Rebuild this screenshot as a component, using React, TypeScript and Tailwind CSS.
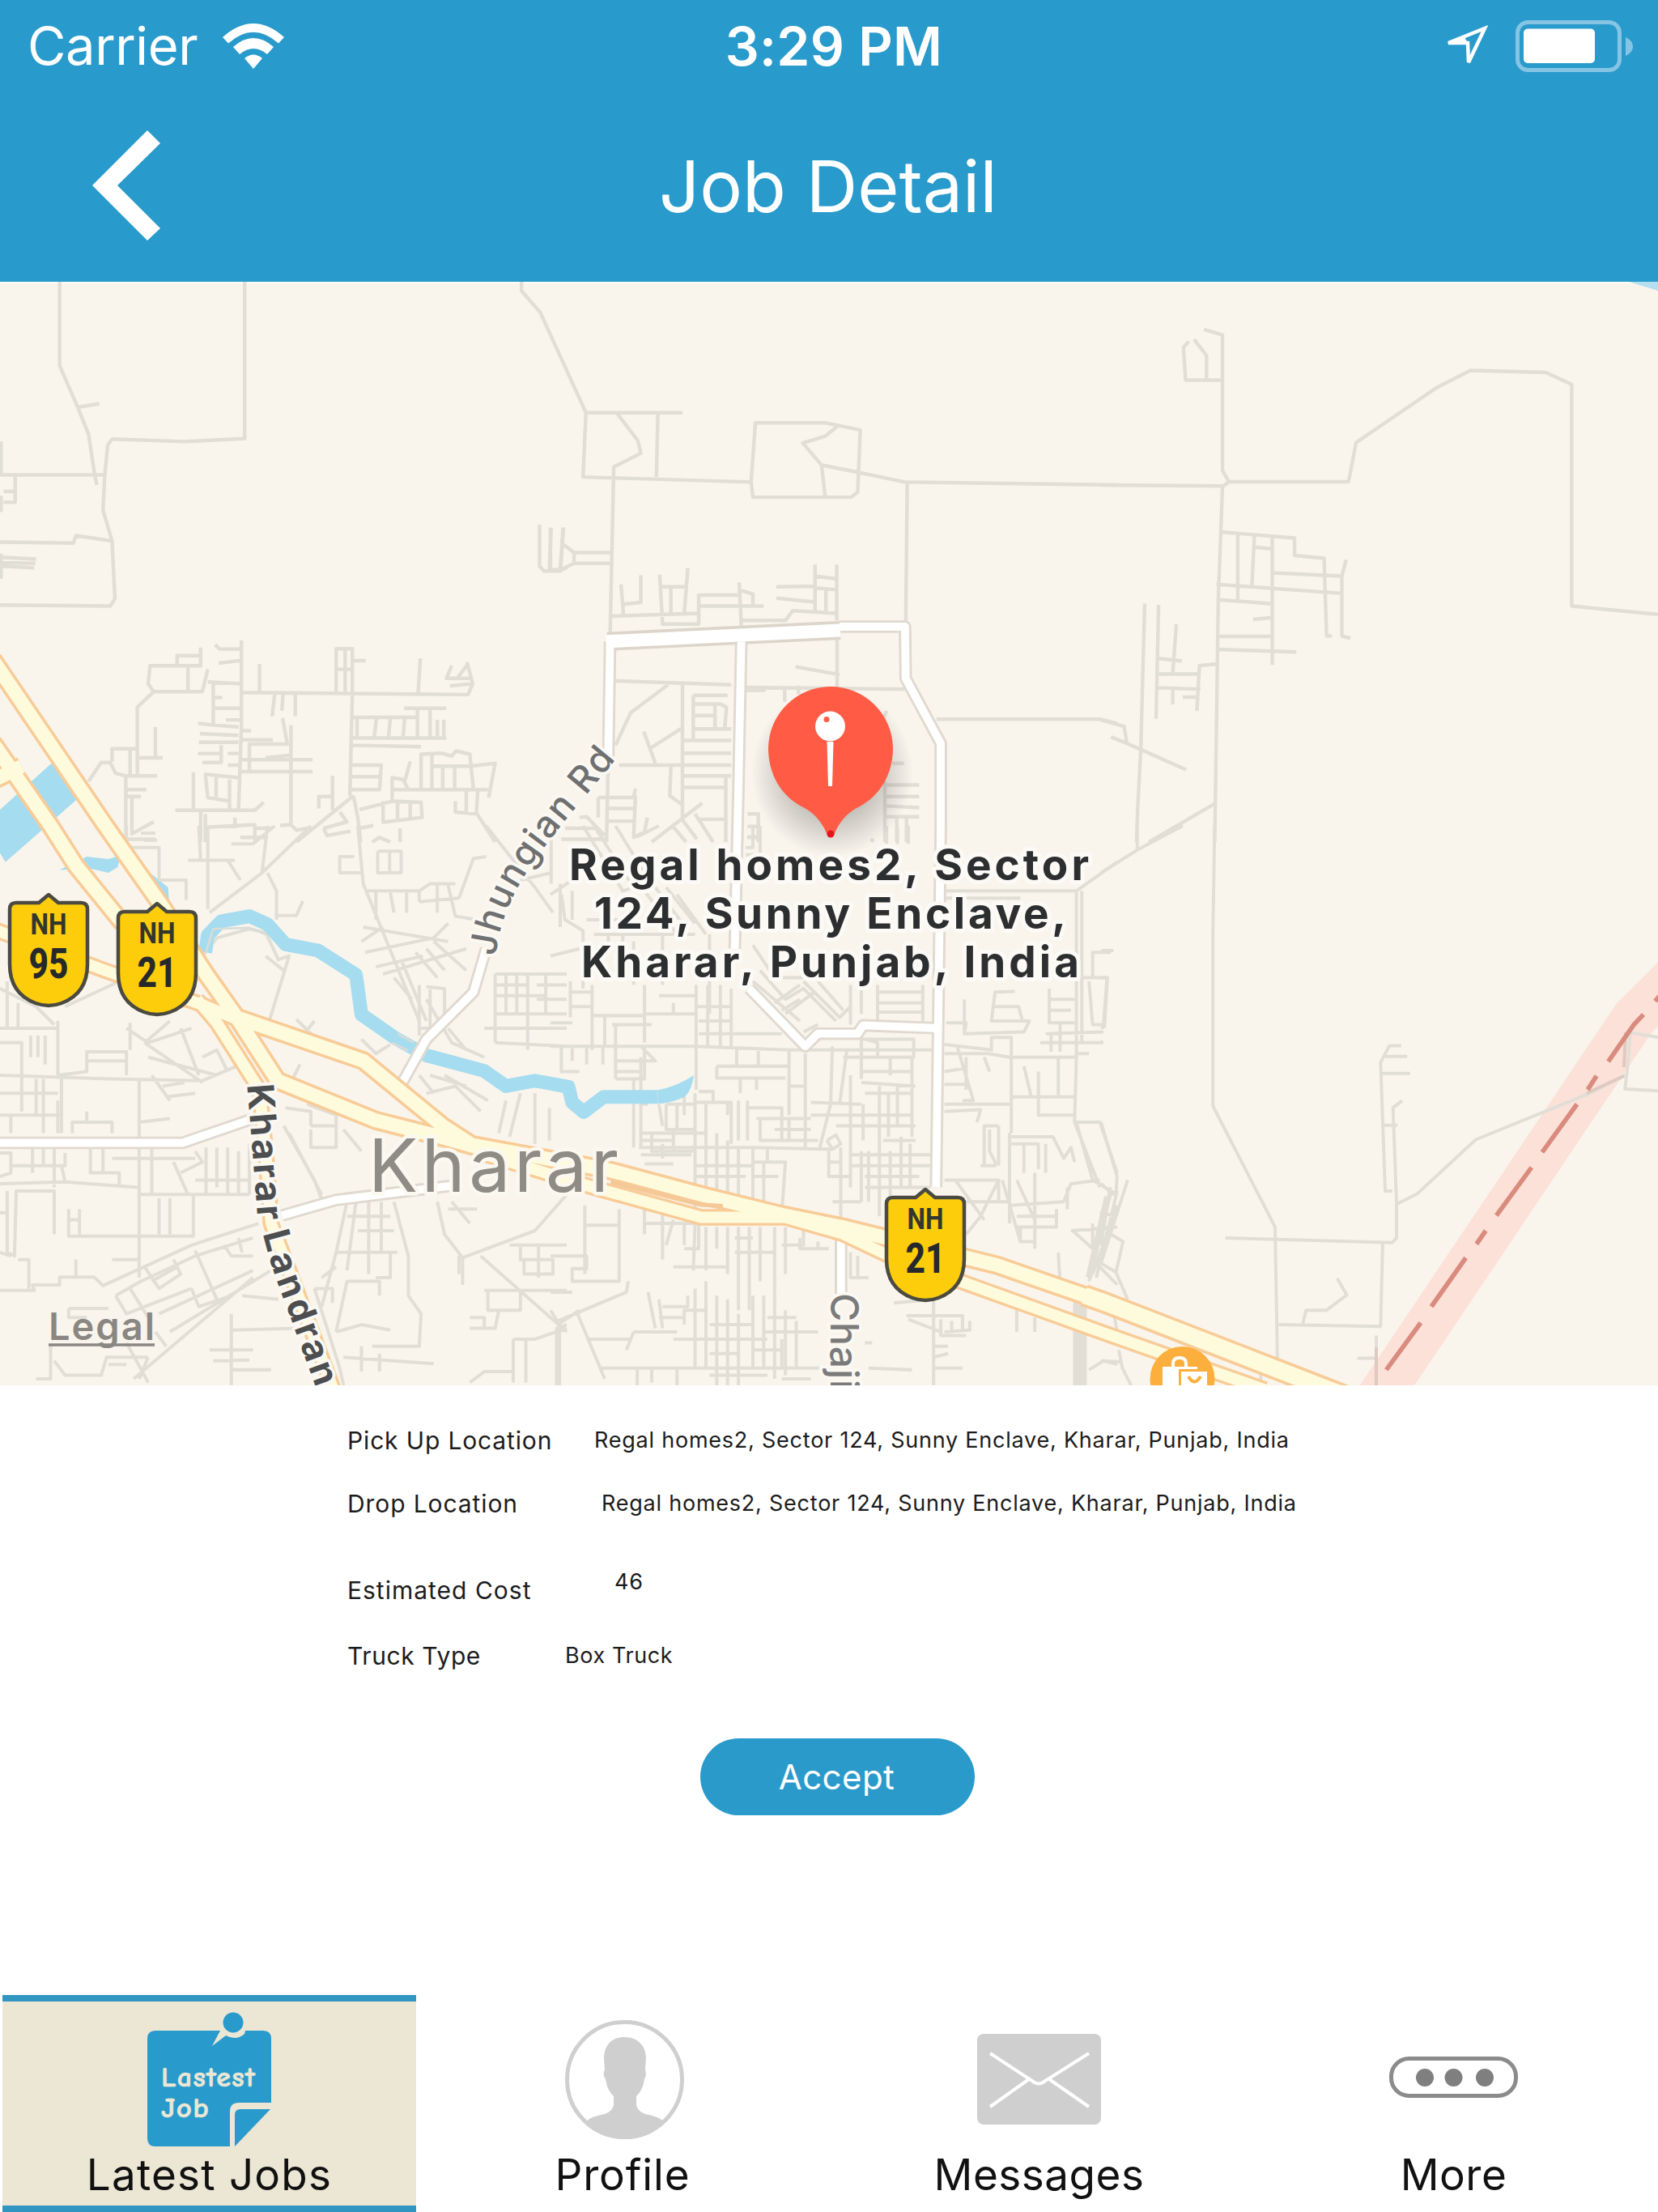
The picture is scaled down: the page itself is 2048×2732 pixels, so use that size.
import React from "react";

const STREETS_NW =
  "M165 18V250L215 365L245 440L262 552L268 580 M215 365L275 355 M677 18V452L510 460L310 453L298 470L290 552L285 650L310 735L318 895L305 915L0 912 M0 552H290 M42 552V628H10 M10 598H42 M0 738L203 741L210 720L310 735 M3 460V552 M3 610V655 M0 780L100 785 M0 795L98 797 M5 805L95 809 M3 770V840 M1443 18V43L1495 103L1523 165 M1493 690V805L1505 818H1550L1568 808 M1525 698L1520 815 M1558 698L1550 815 " +
  "M245 1400L280 1348H305L320 1378L350 1385 M310 1345V1310H375 M360 1310V1385 M380 1385V1195L425 1152H560L575 1090 M425 1152L410 1130L415 1080H555 M490 1080V1052H555V1030 M555 1052V1085 M520 1085V1150 M575 1125L665 1130 M590 1130V1245 M595 1022L608 1034H668 M605 1073L665 1066 M668 1010V1250L660 1480 M590 1168H615 M590 1198H665 M625 1230H665 M548 1240L660 1250 M553 1268L660 1273 M550 1292H660 M548 1323H612 M560 1348H612V1300 M630 1323H660 M630 1355H660 M718 1075V1150 M668 1154L1295 1160L1308 1130L1292 1070 M930 1155V1033H975V1155 M955 1035V1155 M930 1090H975 M975 1066H1012 M1163 1060L1157 1155 M1250 1080L1235 1115H1300 M1245 1136L1305 1130 M1265 1115L1295 1075 " +
  "M760 1160L753 1220 M783 1160L780 1205 M817 1160V1220 M782 1225L795 1297H690V1370 M672 1260H695 M665 1285H755 M805 1245V1520L820 1535L850 1530 M665 1340H865 M665 1373H865 M735 1335L800 1328 M975 1155L968 1440 M975 1223H1155 M975 1280H1235 M988 1223V1280 M1042 1223L1035 1280 M1080 1223L1075 1280 M1120 1223L1115 1280 M1118 1198H1235 M1155 1198V1280 M1190 1198V1280 M1210 1230V1280 M1228 1230V1280 M968 1300L1165 1304 M968 1355H1055L1050 1423H968 M968 1387H1050 M1165 1423V1325L1220 1322L1250 1330L1262 1316L1300 1325L1310 1423 M1195 1325V1423 M1195 1358H1300L1370 1350L1352 1445 M1225 1358V1423 M1258 1358V1423 M1085 1455V1390L1115 1395L1130 1423 M1090 1423H1350 M1135 1345L1120 1400 M995 1478L1085 1455L1165 1458L1168 1500L1060 1513V1455 M1100 1458V1510 M1135 1458V1505 M978 1440L990 1500L998 1568 M978 1440L820 1568 M920 1385V1480 M920 1442H882V1475 M805 1520L775 1522 M1260 1455V1485L1320 1490L1370 1568 M1290 1423V1485 M1322 1423L1318 1490 " +
  "M348 1385V1550 M348 1385H435 M380 1335H450 M430 1250V1335 M350 1423H405 M350 1442H390 M365 1442V1545L425 1512 M535 1375V1480 M565 1380L660 1390 M568 1380L575 1445L635 1455 M598 1382V1450 M485 1480H705L730 1458 M635 1395V1480 M555 1485V1568 M568 1490V1568 M568 1527L705 1520V1568 M665 1555H740 M705 1530H755 M650 1500V1530 M350 1560H430 M895 1530L960 1512L940 1485 M895 1530L905 1550L970 1538 M995 1530L1033 1522 M1030 1568L1050 1555L1080 1568 M1107 1530V1568";

const STREETS_N =
  "M0 165L98 380L90 558L555 572L567 408H760L857 428L850 600L832 614H560L555 572 M98 380H365 M185 383L242 458L250 492L175 530L165 990 M297 383L293 558 M797 415L760 445L698 464L750 525L760 614 M750 525L850 545L980 572L1568 580 M987 572L983 960 " +
  "M0 815H28L65 797H165 M36 698L28 810 M0 700V815 M36 745L65 767V797 M65 767H165 M195 855L202 940 M250 830V905L202 910 M302 828L310 965H410V885H525 M380 810L370 935 M305 862H372 M333 862V935 M170 943L410 935 M410 915H590 M522 850L528 970 M528 872L560 882V915 M528 955H650L670 928L790 935 M625 862L730 860 M625 893L730 904 M732 800V930 M792 800V955 M732 832L792 840 M732 865L792 870 M762 865V930 M793 1000V1140 M678 1083L800 1105 M180 1122L500 1133 M540 1140L980 1145 M540 1148H595 M648 1140V1180 M686 1135V1160 " +
  "M1068 1228H1520L1568 1240 M325 1133L222 1210L180 1300 M365 1133V1500 M395 1162H490 M395 1162V1285 M395 1186H470L487 1195L482 1255 M395 1218H450 M455 1190V1255 M395 1255H500 M365 1287H500 M365 1322H500 M190 1355H500 M365 1385H500 M365 1417H485 M485 1385V1568 M258 1262L290 1350 M277 1308L365 1252 M333 1360L330 1440L365 1465 M132 1445H230L235 1420 M160 1475H230 M160 1510H230 M235 1440L230 1555L260 1540L268 1500 M132 1445V1500 M280 1568L420 1460 M335 1520L375 1568 M360 1500L405 1560 M400 1490L450 1568 M410 1505H480 M40 1530H130 M30 1560H150 M80 1500L100 1498L150 1550 M545 1490H575V1568 M545 1525H575 M545 1555H575 M920 1230L930 1205 M945 1350H978 M925 1410H1020 M925 1442H1020 M925 1468L1020 1473 M925 1498H1020 M925 1400V1568 M958 1498V1568 M985 1498V1568 M890 1568V1558 M160 1330L155 1568";

const STREETS_NE =
  "M290 150L342 165V540L360 571H697L718 463L943 312L1040 263L1252 269L1325 302V915L1568 938 M0 580L345 583L360 571 M342 290H238L232 200L247 183 M262 177L297 222V290 M342 583L330 900L325 1250L320 1568 M335 710L545 727V775L628 783L635 998H650 M385 712V900 M432 715L425 858 M432 752L482 757 M482 722V1078 M482 823L678 832 M690 787L678 832V998L702 1004 M325 855L678 880 M325 897L482 909 M428 952L482 947 M330 999H482 M330 1035L550 1042 M123 908L112 1310L103 1480L100 1568 M162 912L155 1227 M212 965L202 1100 M160 1060L228 1067 M160 1103H277 M160 1141L280 1145 M325 1075L277 1080L270 1205 M202 1145V1187 M230 1167H272 M0 1230L65 1248L73 1295 M28 1277L73 1295L240 1368 M320 1462L135 1568";

const STREETS_SW =
  "M350 0V60H440V150 M390 20H430 M400 40H435 M440 150H515V205 M540 95H650 M550 0L555 95 M575 0V230 M520 95H630L665 150 M640 50H700L760 0 M740 130L765 180V260 M765 248H820L838 208 M860 0L725 130L580 240 M725 130L740 0 M990 0L1005 160L1070 320L1160 540 M1005 130L940 130V85H980 M1045 70V130H1110V70H1045 M1078 70V130 M1015 180H1160V210 M1040 180V260 M1080 185L1090 240 M1125 185V240 M1160 180L1190 160H1260 M1210 160V240 M1240 165L1260 250L1320 260 M1160 210L1270 200 M1270 200L1310 90L1345 85 M1345 0L1480 170L1530 240 M1440 150L1525 130 M1525 0V160 M1550 160V280 M1005 280L1240 320 M1000 320L1060 280 M1010 350L1200 310L1240 270 M1040 390L1170 360 M1060 410L1290 340 M1090 420L1140 480 M1110 370L1180 540 M1150 350L1210 420 M1180 340L1230 400 M1200 320L1290 400 M1160 440V580 M1190 445V560 M1180 445L1230 450V560H1165 M1370 410H1568 M1370 410V600 M1400 410V520 M1430 410V520 M1460 410V620 M1510 410V520 M1370 440H1460 M1370 470H1510 M1370 520H1568 M1340 560H1568 M1370 600L1568 610 M1485 440H1568 M1485 480H1568 " +
  "M560 360L600 310L690 285L735 295L770 370L800 360L745 540 M735 360L785 400 M820 535L865 580 M850 565L870 540 M860 580L865 600 M1000 590L1040 630L1080 605 M1180 480L1250 600L1340 640 M1240 560L1290 620 " +
  "M0 560H160V690 M20 430V560 M50 490V560 M0 600H60V700 M85 580V640 M105 580V640 M125 580V660 M160 540V690 M0 450L100 500L150 550 M330 430L180 500 M160 690L240 680V625H350V690 M240 650H350 M350 560L410 600L530 560 M400 600L560 710 M400 600L470 540 M410 640L600 690 M560 640L600 620L630 680 M500 560L550 690 M360 545V620 M0 690L300 700L560 705L690 650 M420 690L470 760 M450 720L510 710 M460 750L540 740 M0 800H170V700 M0 740H160 M60 700V790 M100 700V800 M120 700V850 M30 800V850 M50 800H170V850 M200 850V820H310V850 M240 820V790 M385 700V870 M385 820L470 810 M160 850V760 " +
  "M0 905H30V960L0 970 M30 940H180V905 M90 890V960 M120 885V940 M150 885V1000 M180 985L380 1000 M0 990L180 985L170 940 M385 885V1250 M385 920H540 M250 880V960H330V1000 M285 890V960 M310 920H385 M420 890V1020 M385 1020H690 M480 930L520 1020 M500 960L560 930L540 900 M570 890V1020 M600 890V1000 M630 890V1020 M540 980H690 M660 900V1020 M690 880V1020 M20 1010V1180L40 1190L45 1010H150V1130 M0 1070H20 M0 1180L30 1190 M190 1060V1135H535V1020 M220 1060V1130 M190 1090H220 M440 1030V1130 M470 1030V1130 M50 1200H80V1280 M0 1285H95L90 1270H165V1248H260L285 1272L530 1160L715 1100 M210 1200V1248 M310 1200H385 M320 1300L390 1260L540 1190L700 1140 M320 1300L350 1350L530 1280 M540 1175L600 1310 M360 1280L410 1360 M400 1220L440 1280L500 1240L480 1200 M420 1260L490 1220 M440 1350L700 1230 M470 1400L750 1230 M370 1530L700 1250 M530 1280L550 1330L640 1300 M620 1160L640 1190H700 M660 1140L670 1180 M140 1440V1530H100 M190 1335H300 M190 1335V1360H240 M150 1480L180 1520H280L295 1470H410 M410 1470L385 1530 M350 1430L410 1540 M350 1490H300 M430 1400L460 1440 M640 1350V1568 M580 1450H700 M590 1480L690 1478 M640 1505H750 M640 1395L830 1390 M670 1300L770 1310 " +
  "M785 830L870 980L900 1060 M800 850L890 1020 M800 700L830 740 M790 780L860 790V830 M850 770L930 800V890H860V840 M860 830H930 M830 660L800 720 M950 840L1000 900 M1110 850L1220 880 M1160 690L1200 740 M1190 690L1290 720 M1230 690L1350 760 M1180 740L1260 720L1330 790 M1400 760L1380 850 M1440 740L1410 860 M1480 740V880 M1520 780V870 M960 1040L930 1180L890 1330 M985 1040L960 1230 M1020 1040V1240 M1055 1040V1180 M1090 1040L1130 1190V1300L1165 1350L1160 1440L1030 1440 M990 1120H1090 M960 1080H1080 M1050 1180H1080V1250H1040 M930 1180H1100 M890 1250L930 1220 M870 1280H920V1320 M930 1400L960 1260H1050V1300 M930 1400L1000 1380L1080 1395 M950 1470L1200 1488 M1000 1440V1510 M1050 1460V1510 M1210 1040L1230 1130L1280 1195L1480 1120L1568 1020 M1250 1040L1300 1100 M1240 1060H1320 M1280 1195V1270 M1270 1190V1240 M1330 1190L1568 1400 M1568 1380L1540 1390V1568 M1410 1160H1568 M1440 1165V1200H1530V1240H1450V1200 M1490 1165V1250 M1340 1285H1568 M1350 1290V1340H1440V1290 M1300 1390H1370L1380 1340 M1300 1360H1340V1390 M1420 1420V1540 M1455 1420V1540 M1420 1420H1480L1568 1390 M1300 1540L1340 1510H1420 M870 1280L940 1500L955 1568";

const STREETS_S =
  "M0 190L60 150 M30 190L40 260L90 290V450 M60 180V260 M90 0L200 180L260 160 M120 0L230 170 M180 0L260 130 M240 30L300 0 M260 180L350 300 M290 170L380 290 M320 170L400 270 M350 190L430 300 M100 260H200V330 M120 300H200V420 M160 250V350 M200 300H400 M230 320V440 M310 300V440 M440 300V520 M560 0V60H540 M580 0V80H540 M545 30H580 M930 0V50 M960 0V50 M990 0V50 M0 360L80 340 M55 430V500H115 M50 460H115 M115 440V620 M55 500V530 M0 545H60 M115 525H260V490 M150 525V610 M170 550H280 M180 545V700 M0 610H400L660 620H1065 M260 440V600 M340 490V520 M260 520H400 M300 470H400 M403 440V730 M435 440V610 M470 440V610 M500 450V610 M410 540H500 M410 575H640 M405 500H500 M30 610V680H80 M60 615V650 M100 610V660 M145 610V660 M175 650H290L250 610 M180 700H260V610 M230 700V890 M250 640V890 M180 680H250 M560 330L620 420H700 M560 430L690 540 M580 400L650 480L700 450L790 540 M620 490L690 440 M650 520L730 460 M700 430L800 530L830 500 M740 430L810 510 M640 510L690 480 M700 570L740 550 M830 440V550 M905 440V545 M905 460H1030 M905 490H1030 M905 515H1030 M1030 440V545 M860 440V520 " +
  "M460 665H660 M460 665V698H650 M515 615V665 M575 620V665 M525 700V740 M570 700V730 M660 620V800 M705 630V890 M660 720H705 M780 610L775 770L745 890 M820 620L800 770 M810 640H1005V590H860V700 M870 590L905 600V640 M860 680H1000 M940 640V690 M860 710L1010 720 M870 740H1000 M830 690V870 M865 770V870 M720 765L860 770 M790 830H1010 M910 720V900 M935 740V860 M960 720V830 M1000 640V860 M860 800H1000 M720 800H860 M400 765H500V880 M450 770V735H410 M490 765V800 M520 760V870 M545 760V870 M570 810H720 M580 810V870H740 M660 810V870 M620 840H720 M540 780H640V870 M320 770H400 M320 770V840H400 M350 770V840 M370 740V800 M300 770L310 830 M245 770H270 M245 850H430 M250 870H340V900 M280 850V900H400 M310 880V920 M340 840V890 M400 740V1100 M245 890H560L780 895 M250 910H390 M260 935H340 M430 770V1010 M460 850V1030 M490 870V1040 M520 890V1050 M400 940H560 M400 970H540 M560 890V1060 M590 930V1070 M560 930H650L640 1070 M560 970H630 M600 895V930 M770 900V970H830 M803 890V1140 M770 930H800 M830 870V1000 M860 900V1040 M880 900V1040 M910 900V1080 M940 900V1040 M970 860V1000 M995 880V1000 M830 910H1050 M830 940H1050 M870 970H1020 M870 1000H1050 M780 1040H860 M765 870L790 855L803 880L780 895L765 870 M920 870H1010 " +
  "M1090 605L1220 620V585H1275V850 M1090 630H1210L1270 640L1450 640 M1125 610L1170 760H1140 M1150 640V730 M1200 640L1215 680 M1090 680L1150 670 M1090 715H1150 M1090 770H1270 M1090 790L1190 785L1180 820 M1145 480V570 M1095 545H1150L1145 575L1310 570L1325 540H1220L1230 460L1285 458 M1225 500H1295L1305 535 M1380 450V545H1450 M1380 480H1450 M1380 510H1440 M1385 570V625 M1410 545V625 M1355 600H1530 M1370 575L1530 570 M1490 630H1450 M1455 180V640L1450 820L1520 1000 M1470 180V600 M1095 180H1455L1568 100 M1090 200H1300 M1460 420H1540L1530 550 M1490 430L1500 550H1530 M1500 420V350H1550 M1275 750H1450 M1310 665L1330 750 M1350 680V800H1450 M1405 640V745 M1450 820H1520L1568 960 M1455 820L1500 980L1568 1020 M1275 860H1390L1420 920L1440 890L1450 930 M1200 940V830H1240 M1215 840V900L1230 930V940H1190 M1240 830V940 M1270 850V1100 M1275 880H1350V950 M1310 880V960 M1370 880V960 " +
  "M1090 980H1240V1040 M1120 980L1200 1090 M1240 980L1190 1080L1150 1130 M1140 1040H1270 M1250 980L1300 1150 M1290 980L1340 1090 M1270 1050L1420 1040 M1340 960V1170 M1290 1080H1400 M1290 1110H1400V1060 M1300 1110V1150H1340 M1420 1040L1440 990L1520 980 M1430 1060V1000 M1440 1120L1568 1110 M1445 1120L1500 1170 M1500 1100V1170 M1520 1070L1568 1080 M1550 1000L1490 1260 M1568 1010L1510 1250 M1568 1050L1500 1240 M1500 1200L1568 1270 M1405 1180L1410 1270 M1290 1340V1400 M1340 1360V1400 " +
  "M95 1050V1240 M190 1060V1260H60V1225H100V1190H60 M95 1105H190 M0 1190H60 M0 1290H60 M20 1370L210 1290L215 1260 M0 1340L25 1380V1568 M20 1380L80 1340 M75 1350L150 1530 M260 1060V1130 M310 1060V1200 M340 1090L320 1160 M370 1100V1160 M410 1100V1170H370 M260 1100H400 M400 1100L395 1230 M340 1220H490 M430 1110V1230 M460 1110V1170 M490 1110V1240 M520 1110V1340 M550 1110V1340 M580 1110V1260 M620 1110V1320 M650 1110V1240 M510 1140H560 M510 1180H620 M640 1160H700V1120 M690 1140V1170H770 M740 1150V1170 M830 1180V1250H880 M850 1190V1250 M270 1290L290 1390 M300 1310L310 1390 M310 1330H380V1300 M300 1360H370 M230 1400H350 M230 1400L210 1450 M370 1380V1340H430 M400 1280V1500 M430 1260V1500 M460 1300V1550 M490 1310V1550 M520 1350V1500 M560 1300V1500 M590 1300V1500 M620 1320V1530 M650 1340V1520 M680 1370V1500 M340 1420H600 M440 1380H560 M440 1460H520 M560 1450H640 M600 1360H680 M590 1400H740 M640 1420V1500 M100 1420H220 M140 1500H750 M240 1500V1568 M280 1500V1540 M350 1500V1568 M440 1520H600 M520 1500V1560 M640 1530H720 M870 1430H890 M880 1500L1000 1505 M950 1320L1060 1310 M985 1355H1140V1400 M990 1365L1080 1400 M1080 1365V1410H1150 M1110 1370V1400 M1160 1370V1395L1090 1400 M1060 1310V1568 M1060 1440H1100 M1060 1470L1100 1460 M1060 1500H1140 M1490 1505L1530 1480L1568 1490";

const STREETS_SE =
  "M102 0V65 M320 0L315 300V775L490 1110L497 1500 M0 130L105 65L230 0 M0 345H35 M0 420H18L10 555L0 560 M0 597H5 M0 820L45 970L42 1020L28 1015L0 1120 M0 990L35 1020 M75 980L0 1210L42 1235L75 1310 M28 1130L62 1150L42 1235 M20 1040L0 1160 M350 1140L820 1153L832 1140V1045L822 780L848 760 M845 608H812L787 655L800 1010H820 M800 638H862 M787 685H870 M795 828H835 M835 1045L890 1018L1055 868L1375 740L1475 690 M793 1155L787 1385L500 1380 M665 1252L692 1298L635 1340H577L568 1378 M775 1410V1548 M722 1473H775 M35 1340L45 1400 M50 1450L60 1500L85 1548 M0 1480L55 1483 M450 1500V1548 M1490 570L1483 660L1475 728L1568 733 M1490 572L1568 585";

const RIVER =
  "M568 350L575 302L612 264L690 250L740 272L790 328L880 345L985 412L1000 522L1095 588L1180 635L1340 678L1400 720L1480 705L1573 722L1583 765L1615 792L1670 750H1820";

const HIGHWAY =
  "M-20 -460L292 0L450 225L570 410L655 530L1005 650L1225 830L1305 882L1683 952L1953 1024L2163 1076L2340 1112L2760 1216L3060 1320L3640 1545L3700 1568 M655 530L768 705L1040 815L1225 862L1330 892 M-20 -230L140 0L210 110L340 270 M-20 -125L60 -165";
const HIGHWAY_NARROW =
  "M-20 285L290 400L560 495L680 545 M545 480L600 545L718 730L735 900L750 1100L800 1230L930 1580 M1330 905L1640 1000L1940 1083H2173L2330 1128L2450 1185L2690 1272L3060 1405L3500 1560";
const HIGHWAY_WIDE = "M3000 1299L3060 1320L3640 1545L3720 1576";

const WHITE_ROADS =
  "M1345 340L1310 460L1180 590L1105 725 M1688 -510L1683 -190 M2051 -510L2043 -100L2033 340 M2323 -551H2504L2506 -408L2603 -228V0L2590 1000 M2073 450L2228 610L2263 575H2373L2388 552L2600 560 M-10 877H505L700 810 M780 1078L930 1035L1280 992 M2327 1140V1295";

function Shield({ x, y, num }: { x: number; y: number; num: string }) {
  return (
    <g transform={`translate(${x} ${y})`}>
      <path
        d="M8 12H36L48 2L60 12H88Q96 12 96 20V88Q96 124 64 136Q48 142 32 136Q0 124 0 88V20Q0 12 8 12Z"
        fill="#fdcd0b"
        stroke="#4b4a41"
        strokeWidth="4.5"
        strokeLinejoin="round"
      />
      <text x="48" y="51" textAnchor="middle" fontSize="37" fontWeight="700" textLength="45" lengthAdjust="spacingAndGlyphs" fill="#33352f" fontFamily="Roboto, sans-serif">
        NH
      </text>
      <text x="48" y="105" textAnchor="middle" fontSize="52" fontWeight="800" textLength="49" lengthAdjust="spacingAndGlyphs" fill="#26292c" fontFamily="Roboto, sans-serif">
        {num}
      </text>
    </g>
  );
}

const LABEL = { fontFamily: "Inter, sans-serif", paintOrder: "stroke" as const, strokeLinejoin: "round" as const };

function MapView() {
  return (
    <svg viewBox="0 348 2048 1363" className="block h-[1363px] w-full shrink-0 bg-[#f9f5ed]" fill="none">
      <defs>
        <path id="jhungian" d="M1371 362C1388 215 1462 112 1560 -10L1760 -252" />
        <path id="khararA" d="M684 716L715 1112" />
        <path id="landran" d="M727 1128Q752 1230 800 1350L905 1640" />
        <radialGradient id="pinShade">
          <stop offset="0.5" stopColor="#000" stopOpacity="0.22" />
          <stop offset="1" stopColor="#000" stopOpacity="0" />
        </radialGradient>
      </defs>
      <path d="M0 348H2048V350H0Z" fill="#fdfbf6" />
      <path d="M2012 348H2048V359Z" fill="#b3dff0" />

      {/* water */}
      <g transform="translate(0 1020) scale(0.446429)">
        <path d="M0 -45L145 -175L215 -75L15 100L0 75Z" fill="#a6dcef" />
        <path d="M165 122L240 85L300 92L335 82L325 115L300 130L250 118Z M415 130L465 170L468 208L440 205Z" fill="#a6dcef" />
      </g>

      {/* protected corridor */}
      <path d="M1694 1740L2018 1258L2070 1206" stroke="#fbe1d8" strokeWidth="56" />

      {/* minor streets */}
      <g stroke="#e1ded6" strokeLinejoin="round">
        <path transform="translate(0 340) scale(0.446429)" strokeWidth="10" d={STREETS_NW} />
        <path transform="translate(680 340) scale(0.446429)" strokeWidth="10" d={STREETS_N} />
        <path transform="translate(1360 340) scale(0.438776 0.446429)" strokeWidth="10" d={STREETS_NE} />
        <path transform="translate(0 1020) scale(0.446429)" strokeWidth="9" d={STREETS_SW} />
        <path transform="translate(680 1020) scale(0.446429)" strokeWidth="9" d={STREETS_S} />
        <path transform="translate(1360 1020) scale(0.438776 0.446429)" strokeWidth="9" d={STREETS_SE} />
        <path d="M1334 1600V1711" strokeWidth="17" />
        <path d="M1345 1578L1368 1478" strokeWidth="8" />
      </g>
      <path d="M2008 1275L2006 1318M1960 1350L2006 1329M1700 1664V1711" stroke="#e0c9c1" strokeWidth="4" />

      {/* state boundary dashes */}
      <g transform="translate(1360 1020) scale(0.438776 0.446429)" stroke="#d98b7e" strokeWidth="13">
        <path d="M803 1505L900 1375M930 1330L1027 1195M1057 1157L1083 1120M1113 1078L1212 945M1242 903L1340 770M1370 730L1395 692M1428 652L1500 550L1527 522M1560 485L1590 450" />
      </g>

      <g transform="translate(0 1020) scale(0.446429)" strokeLinejoin="round">
        <path d={RIVER} stroke="#a6dcef" strokeWidth="38" />
        <path d="M1820 731Q1870 722 1920 690Q1912 740 1890 752Q1850 768 1820 769Z" fill="#a6dcef" />
        <path d="M570 350L590 285L690 282L735 300 M1085 600L1130 622 M1100 575L1145 600" stroke="#d9dcd6" strokeWidth="6" />
        <path d={WHITE_ROADS} stroke="#e0d9cf" strokeWidth="35" />
        <path d="M1680 -510L2325 -541" stroke="#dcd5ca" strokeWidth="52" />
        <path d={WHITE_ROADS} stroke="#ffffff" strokeWidth="22" />
        <path d="M1677 -510L2325 -541" stroke="#ffffff" strokeWidth="36" />
        <path d={HIGHWAY} stroke="#f8cb97" strokeWidth="54" />
        <path d={HIGHWAY_WIDE} stroke="#f8cb97" strokeWidth="62" />
        <path d={HIGHWAY_NARROW} stroke="#f8cb97" strokeWidth="46" />
        <path d={HIGHWAY} stroke="#fdfbdc" strokeWidth="38" />
        <path d={HIGHWAY_WIDE} stroke="#fdfbdc" strokeWidth="46" />
        <path d={HIGHWAY_NARROW} stroke="#fdfbdc" strokeWidth="31" />
        <path d="M1690 985L1940 1048L2000 1052" stroke="#f5c898" strokeWidth="12" />

        <g style={LABEL} stroke="#fbf8f2" strokeWidth="17">
          <text fontSize="102" fontWeight="500" fill="#6f7071">
            <textPath href="#jhungian" textLength="650">Jhungian Rd</textPath>
          </text>
          <text fontSize="101" fontWeight="700" fill="#4c4e50">
            <textPath href="#khararA" textLength="378">Kharar</textPath>
          </text>
          <text fontSize="101" fontWeight="700" fill="#4c4e50">
            <textPath href="#landran" textLength="452">Landran</textPath>
          </text>
        </g>
      </g>

      <g style={LABEL}>
        <text x="455" y="1472" fontSize="91" textLength="309" fill="#8f8b85" stroke="#fbf8f0" strokeWidth="9">
          Kharar
        </text>
        <text transform="translate(1026 1597) rotate(90)" fontSize="48" fontWeight="500" textLength="119" fill="#7b7b7a" stroke="#fbf8f2" strokeWidth="8">
          Chaji
        </text>
        <text x="60" y="1655" fontSize="47" fontWeight="600" textLength="131" fill="#8a8783">
          Legal
        </text>
        <path d="M60 1661H191" stroke="#8a8783" strokeWidth="3.5" />
      </g>

      <Shield x={12} y={1103} num="95" />
      <Shield x={146} y={1114} num="21" />
      <Shield x={1095} y={1467} num="21" />

      {/* shopping place marker */}
      <circle cx="1460.500" cy="1703" r="40" fill="#fcaf3c" />
      <path d="M1436 1688H1479V1691H1456V1711H1436Z" fill="#fff" />
      <path d="M1449 1688V1684Q1449 1677 1457 1677Q1465 1677 1465 1684V1688" stroke="#fff" strokeWidth="4" />
      <path d="M1459 1694H1491V1711H1459Z" fill="#fff" />
      <path d="M1468 1700Q1475 1713 1483 1700" stroke="#fcaf3c" strokeWidth="4" />

      {/* dropped pin */}
      <ellipse cx="1028" cy="954" rx="100" ry="104" fill="url(#pinShade)" />
      <path
        d="M1026 848A77 77 0 0 1 1103 924C1103 955 1088 983 1060 997C1044 1005 1034 1020 1030 1032H1022C1018 1020 1008 1005 992 997C964 983 949 955 949 924A77 77 0 0 1 1026 848Z"
        fill="#ff5b45"
      />
      <circle cx="1026" cy="1030" r="4.500" fill="#e3161b" />
      <circle cx="1025.500" cy="897" r="18.500" fill="#fff" />
      <circle cx="1021" cy="888.500" r="3.500" fill="#ff5b45" />
      <path d="M1021.500 916H1029.500L1028 971H1023Z" fill="#fff" />
      <g style={LABEL} fontSize="53" fontWeight="700" fill="#2c2e30" stroke="#fcfaf6" strokeWidth="10">
        <text x="703" y="1087" textLength="642">Regal homes2, Sector</text>
        <text x="734" y="1147" textLength="583">124, Sunny Enclave,</text>
        <text x="718" y="1207" textLength="615">Kharar, Punjab, India</text>
      </g>
    </svg>
  );
}

function StatusBar() {
  return (
    <div className="flex h-[113px] items-center justify-between pr-[30px] pl-[34px]">
      <div className="flex w-[718px] items-center gap-[31px]">
        <span className="text-[65px] leading-none tracking-[-0.4px]">Carrier</span>
        <svg viewBox="275 27 76 56" className="h-[56px] w-[76px]" fill="#fff">
          <path d="M275 44Q313 10 351 44L344 51.500Q313 24 282 51.500Z" />
          <path d="M288 56Q313 34 338 56L330 65Q313 51 296 65Z" />
          <path d="M302 70Q313 61 324 70L313 83Z" />
        </svg>
      </div>
      <span className="text-[66px] leading-none font-semibold tracking-[0.3px] whitespace-nowrap">3:29 PM</span>
      <div className="flex w-[710px] items-center justify-end gap-[34px]">
        <svg viewBox="1787 30 53 54" className="h-[54px] w-[53px]" fill="none" stroke="#fff" strokeWidth="4.5" strokeLinejoin="miter">
          <path d="M1791 53L1836 35L1816 77L1815 53Z" />
          <path d="M1791 53L1811 46L1815 53Z" fill="#fff" stroke="none" />
        </svg>
        <svg viewBox="1873 24 146 64" className="h-[64px] w-[146px]" fill="none">
          <rect x="1875.500" y="26.500" width="126" height="59" rx="13" stroke="#85c5e3" strokeWidth="5" />
          <rect x="1883" y="34.500" width="88" height="42.500" rx="5" fill="#fff" />
          <path d="M2009 45Q2018 49 2018 56.500T2009 68Z" fill="#85c5e3" />
        </svg>
      </div>
    </div>
  );
}

function NavBar() {
  return (
    <div className="flex h-[235px] items-center">
      <button className="-mt-[3px] pl-[114px]" aria-label="Back">
        <svg viewBox="114 161 84 136" className="h-[136px] w-[84px]" fill="#fff">
          <path d="M182 161L198 177L145 229L198 282L182 297L114 229Z" />
        </svg>
      </button>
      <h1 className="-mt-[2px] ml-[616px] text-[88px] leading-none font-normal tracking-[0px] whitespace-nowrap">Job Detail</h1>
    </div>
  );
}

function Details() {
  return (
    <section className="flex flex-col pt-[48px] pl-[429px] text-[27px] whitespace-nowrap text-[#1c1c1c]">
      <div className="flex h-10 items-center">
        <span className="w-[305px] text-[30px] tracking-[0.85px]">Pick Up Location</span>
        <span className="tracking-[0.77px]">Regal homes2, Sector 124, Sunny Enclave, Kharar, Punjab, India</span>
      </div>
      <div className="mt-[38px] flex h-10 items-center">
        <span className="w-[314px] text-[30px] tracking-[0.9px]">Drop Location</span>
        <span className="tracking-[0.77px]">Regal homes2, Sector 124, Sunny Enclave, Kharar, Punjab, India</span>
      </div>
      <div className="mt-[67px] flex h-10 items-center">
        <span className="w-[330px] text-[30px] tracking-[1px]">Estimated Cost</span>
        <span className="mb-5 tracking-[0.8px]">46</span>
      </div>
      <div className="mt-[41px] flex h-10 items-center">
        <span className="w-[269px] text-[30px] tracking-[0.6px]">Truck Type</span>
        <span className="tracking-[0.6px]">Box Truck</span>
      </div>
      <button className="mt-[82px] ml-[436px] h-[95px] w-[339px] rounded-full bg-[#2a9acb] pr-[2px] text-[42px] font-normal tracking-[0.4px] text-white">
        Accept
      </button>
    </section>
  );
}

function JobsIcon() {
  return (
    <svg viewBox="183 2485 153 168" className="mt-[13px] h-[168px] w-[153px]">
      <path d="M193 2508H326Q336 2508 336 2518V2597H296Q285 2597 285 2608V2651H193Q183 2651 183 2641V2518Q183 2508 193 2508Z" fill="#289bcc" />
      <path d="M263 2527L273 2508H304L303 2512Q293 2521 280 2514Z" fill="#ece6d5" />
      <circle cx="289" cy="2499" r="16" fill="#ece6d5" />
      <circle cx="289" cy="2498" r="12.500" fill="#289bcc" />
      <path d="M291 2651V2612Q291 2605 298 2605H335Z" fill="#289bcc" />
      <g fill="#ece6d5" stroke="#ece6d5" strokeWidth="0.6" fontWeight="700" fontSize="34" fontFamily="'Comic Sans MS', 'Comic Neue', Lato, sans-serif">
        <text x="200" y="2577" textLength="117" lengthAdjust="spacingAndGlyphs">Lastest</text>
        <text x="200" y="2615" textLength="60" lengthAdjust="spacingAndGlyphs">Job</text>
      </g>
    </svg>
  );
}

function ProfileIcon() {
  return (
    <svg viewBox="698 2495 147 147" className="mt-[23px] ml-[4px] h-[147px] w-[147px]">
      <circle cx="771.500" cy="2568.500" r="71" fill="#fff" stroke="#cfcfcf" strokeWidth="5" />
      <path
        d="M771 2516C788 2516 798 2527 798 2542L797 2556Q799 2563 796 2568Q794 2582 786 2589V2600Q788 2608 797 2611Q813 2614 820 2620Q802 2642 771.500 2642Q742 2642 724 2620Q730 2614 747 2611Q756 2608 758 2600V2589Q750 2582 748 2568Q744 2563 747 2556L746 2542C746 2527 755 2516 771 2516Z"
        fill="#cfcfcf"
      />
    </svg>
  );
}

function MessagesIcon() {
  return (
    <svg viewBox="1207 2512 153 112" className="mt-[40px] h-[112px] w-[153px]" fill="none">
      <rect x="1207" y="2512" width="153" height="112" rx="8" fill="#cfcfcf" />
      <path d="M1223 2536L1275 2570Q1283 2577 1291 2570L1345 2536M1223 2602L1271 2568M1345 2602L1296 2568" stroke="#fff" strokeWidth="4" />
    </svg>
  );
}

function MoreIcon() {
  return (
    <svg viewBox="1716 2540 159 51" className="mt-[68px] h-[51px] w-[159px]" fill="#7f7f7f">
      <rect x="1718.500" y="2542.500" width="154" height="46" rx="22" fill="#fff" stroke="#8b8b8b" strokeWidth="5" />
      <circle cx="1760" cy="2566" r="11" />
      <circle cx="1795.500" cy="2566" r="11" />
      <circle cx="1834" cy="2566" r="11" />
    </svg>
  );
}

function Tab({ icon, label, className }: { icon: React.ReactNode; label: string; className: string }) {
  return (
    <div className={`flex h-full shrink-0 flex-col items-center border-y-8 ${className}`}>
      <div className="h-[180px]">{icon}</div>
      <span className="h-[68px] text-[53px] leading-[68px] font-normal text-[#111111]">{label}</span>
    </div>
  );
}

export default function App() {
  return (
    <div className="flex h-[2732px] w-[2048px] flex-col overflow-hidden bg-white font-['Inter',sans-serif]">
      <header className="h-[348px] shrink-0 bg-[#289acc] text-white">
        <StatusBar />
        <NavBar />
      </header>
      <MapView />
      <Details />
      <nav className="mt-auto flex h-[268px] pl-[3px]">
        <Tab icon={<JobsIcon />} label="Latest Jobs" className="w-[511px] border-[#3095c1] bg-[#ece6d5] tracking-[1.2px]" />
        <Tab icon={<ProfileIcon />} label="Profile" className="w-[510px] border-transparent tracking-[0.9px]" />
        <Tab icon={<MessagesIcon />} label="Messages" className="w-[519px] border-transparent tracking-[0.5px]" />
        <Tab icon={<MoreIcon />} label="More" className="w-[505px] border-transparent tracking-[0.5px]" />
      </nav>
    </div>
  );
}
